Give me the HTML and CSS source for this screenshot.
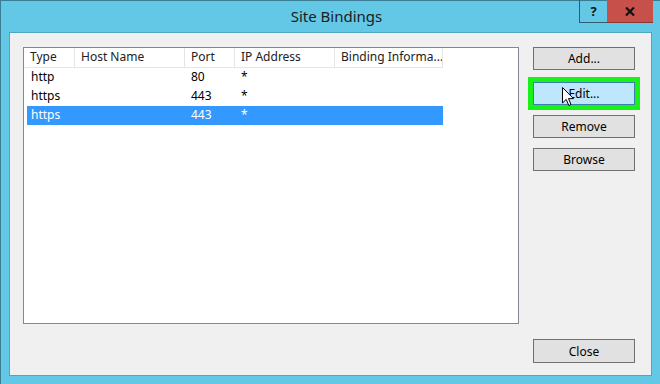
FILE: index.html
```html
<!DOCTYPE html>
<html>
	<head>
		<meta charset="UTF-8">
		<title>Site Bindings</title>
		<link rel="stylesheet" href="styles.css">
	</head>
	<body>
		<div class="window">
			<div class="titlebar">
				<div class="title">Site Bindings</div>
				<div class="caption-buttons">
					<div class="cap help">?</div>
					<div class="cap close">
						<svg width="10" height="9" viewBox="0 0 10 9">
							<path d="M1 0.5 L9 8.5 M9 0.5 L1 8.5" stroke="#111" stroke-width="2.2"/>
						</svg>
					</div>
				</div>
			</div>
			<div class="client">
				<div class="main">
					<div class="listbox">
						<div class="header">
							<div class="col c1">Type</div>
							<div class="col c2">Host Name</div>
							<div class="col c3">Port</div>
							<div class="col c4">IP Address</div>
							<div class="col c5">Binding Informa...</div>
						</div>
						<div class="rows">
							<div class="row">
								<div class="col c1">http</div>
								<div class="col c2"></div>
								<div class="col c3">80</div>
								<div class="col c4">*</div>
								<div class="col c5"></div>
							</div>
							<div class="row">
								<div class="col c1">https</div>
								<div class="col c2"></div>
								<div class="col c3">443</div>
								<div class="col c4">*</div>
								<div class="col c5"></div>
							</div>
							<div class="row selected">
								<div class="col c1">https</div>
								<div class="col c2"></div>
								<div class="col c3">443</div>
								<div class="col c4">*</div>
								<div class="col c5"></div>
							</div>
						</div>
					</div>
					<div class="side">
						<button class="btn">Add...</button>
						<button class="btn hot">Edit...
							<svg class="cursor" width="12" height="20" viewBox="0 0 12 20">
								<path d="M0.5 0.5 L0.5 16 L4.2 12.4 L6.8 18.5 L9 17.5 L6.5 11.6 L11.5 11.6 Z" fill="#fff" stroke="#000" stroke-width="1"/>
							</svg>
						</button>
						<button class="btn">Remove</button>
						<button class="btn">Browse</button>
					</div>
				</div>
				<div class="footer">
					<button class="btn">Close</button>
				</div>
			</div>
		</div>
	</body>
</html>
```
FILE: styles.css
```css
html, body {
	margin : 0; padding : 0;
}
body {
	font-family : "Noto Sans", "Open Sans", sans-serif;
	font-size : 12px;
	color : #000;
}
.window {
	width : 660px;
	height : 384px;
	box-sizing : border-box;
	background : #63c7e6;
	border-top : 1px solid #3a7d92;
	border-left : 1px solid #3a7d92;
	display : flex;
	flex-direction : column;
}
.titlebar {
	height : 31px;
	display : flex;
	position : relative;
}
.title {
	flex : 1;
	text-align : center;
	font-size : 15px;
	line-height : 30px;
	color : #1c1c1c;
	padding-left : 12px;
}
.caption-buttons {
	position : absolute;
	top : -1px;
	right : 7px;
	display : flex;
}
.cap {
	height : 22px;
	line-height : 22px;
	text-align : center;
	font-weight : bold;
	color : #111;
}
.help {
	width : 27px;
	border : solid #2d5e6d;
	border-width : 0 0 1px 1px;
	font-size : 13px;
}
.close {
	width : 46px;
	background : #c7504a;
	border-bottom : 1px solid #8a3632;
	display : flex;
	align-items : center;
	justify-content : center;
}
.client {
	margin : 0 8px 8px 8px;
	flex : 1;
	background : #f0f0f0;
	border : 1px solid #4fa6c0;
	display : flex;
	flex-direction : column;
	padding : 14px 16px 12px 13px;
}
.main {
	flex : 1;
	display : flex;
	gap : 14px;
}
.listbox {
	width : 494px;
	height : 275px;
	background : #fff;
	border : 1px solid #828790;
}
.header, .row {
	display : flex;
	height : 19px;
	line-height : 18px;
}
.header {
	width : 419px;
	border-bottom : 1px solid #e5e5e5;
}
.header .col {
	border-right : 1px solid #e5e5e5;
	color : #222;
}
.col {
	box-sizing : border-box;
	padding-left : 6px;
	white-space : nowrap;
	overflow : hidden;
}
.c1 { width : 51px; }
.c2 { width : 110px; }
.c3 { width : 50px; }
.c4 { width : 100px; }
.c5 { width : 108px; }
.rows {
	padding-left : 3px;
}
.row {
	width : 416px;
}
.row .c1 {
	width : 48px;
	padding-left : 4px;
}
.selected {
	background : #3399ff;
	color : #fff;
}
.side {
	width : 102px;
	display : flex;
	flex-direction : column;
	gap : 10px;
}
.btn {
	width : 102px;
	height : 23px;
	box-sizing : border-box;
	background : #e1e1e1;
	border : 1px solid #707070;
	font-family : "Noto Sans", "Open Sans", sans-serif;
	font-size : 12px;
	color : #000;
	padding : 0;
	position : relative;
}
.side .btn:nth-child(2) {
	margin-top : 2px;
}
.hot {
	background : #bee6fd;
	border-color : #3c7fb1;
	outline : 5px solid #19f219;
	outline-offset : 0;
}
.cursor {
	position : absolute;
	left : 28px;
	top : 4px;
}
.footer .btn {
	height : 24px;
}
.footer {
	display : flex;
	justify-content : flex-end;
}
```
